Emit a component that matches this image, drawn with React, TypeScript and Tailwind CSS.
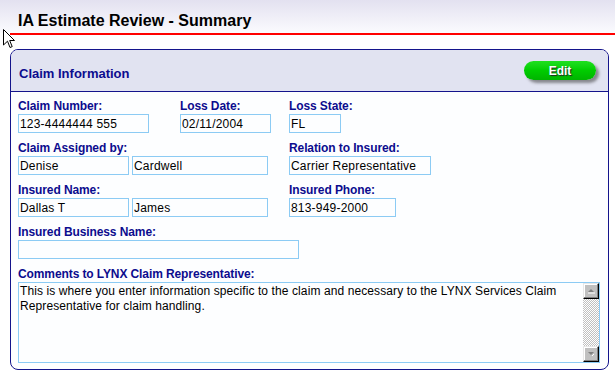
import React from "react";

const Label = ({ children }: { children: React.ReactNode }) => (
  <div className="h-[14px] leading-[14px] text-[12px] font-bold text-[#0c0c8e] tracking-[-0.1px] whitespace-nowrap mb-[1px]">
    {children}
  </div>
);

const Box = ({ value, w }: { value: string; w: string }) => (
  <input
    readOnly
    value={value}
    className={`block ${w} h-[19px] border border-[#8ccbf4] bg-[#fdfeff] pl-[1px] text-[12px] tracking-[0.2px] text-black outline-none`}
  />
);

const ScrollBtn = ({ up }: { up?: boolean }) => (
  <div className="w-[16px] h-[16px] shrink-0 bg-[#c0c0c0] border border-t-[#e8e8e8] border-l-[#e8e8e8] border-r-black border-b-black shadow-[inset_-1px_-1px_#808080,inset_1px_1px_#ffffff] flex items-center justify-center">
    <svg width="8" height="6" viewBox="0 0 8 6">
      {up ? (
        <>
          <path d="M1 4 L4 1 L7 4 Z" fill="#808080" />
          <path d="M1 5 H8" stroke="#ffffff" strokeWidth="1" />
        </>
      ) : (
        <>
          <path d="M1 1 L7 1 L4 4 Z" fill="#808080" />
          <path d="M5 5 L7 3" stroke="#ffffff" strokeWidth="1" />
        </>
      )}
    </svg>
  </div>
);

export default function App() {
  return (
    <div className="relative w-[615px] h-[385px] overflow-hidden bg-white font-['Liberation_Sans',Arial,sans-serif]">
      <div className="h-[33px] bg-gradient-to-b from-[#e3e1f0] to-[#fbfbfe] pl-[18px] pt-[11px]">
        <h1 className="text-[16px] leading-[19px] font-bold text-black">IA Estimate Review - Summary</h1>
      </div>
      <div className="ml-[10px] h-[2px] bg-[#ff0000]" />

      <div className="ml-[10px] mt-[14px] w-[599px] h-[321px] border border-[#14148c] rounded-[8px] bg-[#fdfeff] overflow-hidden">
        <div className="h-[42px] bg-[#e1e3f1] border-b border-[#14148c] flex justify-between pl-[8px] pr-[12px]">
          <div className="pt-[16px] text-[13px] leading-[16px] font-bold text-[#0c0c8e]">Claim Information</div>
          <div className="mt-[11px] w-[72px] h-[19px] rounded-full bg-gradient-to-b from-[#1ee01e] via-[#00cc00] to-[#00b400] shadow-[3px_3px_3px_rgba(60,60,60,0.55)] flex items-center justify-center">
            <span className="text-[12px] font-bold text-white [text-shadow:1px_1px_1px_#222]">Edit</span>
          </div>
        </div>

        <div className="pl-[7px] pt-[7px] flex flex-col gap-[8px]">
          <div className="flex">
            <div className="w-[162px]">
              <Label>Claim Number:</Label>
              <Box value="123-4444444 555" w="w-[131px]" />
            </div>
            <div className="w-[109px]">
              <Label>Loss Date:</Label>
              <Box value="02/11/2004" w="w-[91px]" />
            </div>
            <div>
              <Label>Loss State:</Label>
              <Box value="FL" w="w-[52px]" />
            </div>
          </div>

          <div className="flex">
            <div className="w-[271px]">
              <Label>Claim Assigned by:</Label>
              <div className="flex gap-[3px]">
                <Box value="Denise" w="w-[111px]" />
                <Box value="Cardwell" w="w-[136px]" />
              </div>
            </div>
            <div>
              <Label>Relation to Insured:</Label>
              <Box value="Carrier Representative" w="w-[142px]" />
            </div>
          </div>

          <div className="flex">
            <div className="w-[271px]">
              <Label>Insured Name:</Label>
              <div className="flex gap-[3px]">
                <Box value="Dallas T" w="w-[111px]" />
                <Box value="James" w="w-[136px]" />
              </div>
            </div>
            <div>
              <Label>Insured Phone:</Label>
              <Box value="813-949-2000" w="w-[107px]" />
            </div>
          </div>

          <div>
            <Label>Insured Business Name:</Label>
            <Box value="" w="w-[281px]" />
          </div>

          <div>
            <Label>Comments to LYNX Claim Representative:</Label>
            <div className="w-[582px] h-[81px] border border-[#8ccbf4] bg-[#fdfeff] flex">
              <div className="flex-1 pl-[1px] pt-[1px] text-[12px] leading-[15px] tracking-[0.1px] text-black">
                This is where you enter information specific to the claim and necessary to the LYNX Services Claim Representative for claim handling.
              </div>
              <div className="w-[16px] flex flex-col">
                <ScrollBtn up />
                <div className="flex-1 [background-image:repeating-conic-gradient(#c0c0c0_0_25%,#ffffff_0_50%)] [background-size:2px_2px]" />
                <ScrollBtn />
              </div>
            </div>
          </div>
        </div>
      </div>

      <svg className="absolute left-[3px] top-[29px]" width="12" height="20" viewBox="0 0 12 20">
        <path d="M0.5 0.5 L0.5 16 L4.5 12.2 L7 18.5 L9.2 17.6 L6.7 11.5 L11.5 11.5 Z" fill="#ffffff" stroke="#000000" strokeWidth="1" />
      </svg>
    </div>
  );
}
